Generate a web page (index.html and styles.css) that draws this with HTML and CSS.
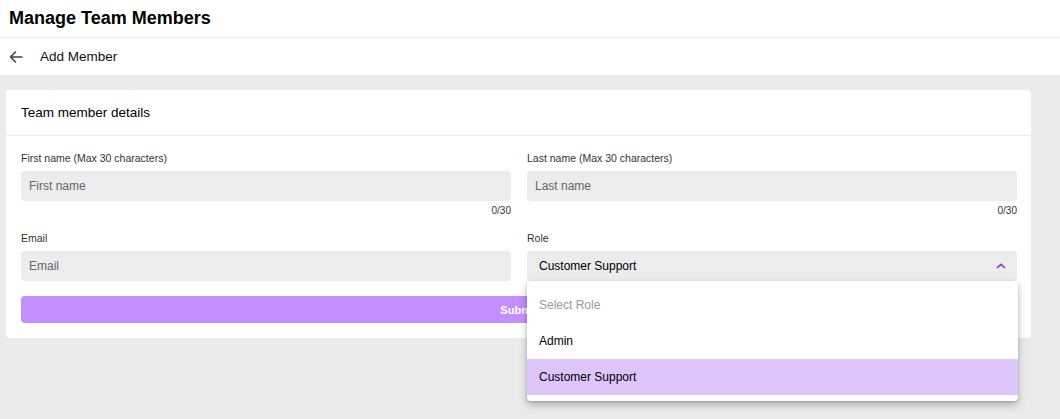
FILE: index.html
```html
<!DOCTYPE html>
<html lang="en">
<head>
  <meta charset="UTF-8" />
  <meta name="viewport" content="width=device-width, initial-scale=1.0"/>
  <title>Manage Team Members</title>
  <link rel="stylesheet" href="styles.css">
</head>
<body>

<div class="topbar">
  <h1>Manage Team Members</h1>
</div>

<div class="subbar">
  <svg class="back" width="16" height="16" viewBox="0 0 16 16"><path d="M14 8H2.5M7.5 3L2.5 8l5 5" fill="none" stroke="#444" stroke-width="1.6" stroke-linecap="round" stroke-linejoin="round"/></svg>
  <span>Add Member</span>
</div>

<div class="page">
  <div class="card">
    <div class="card-head">Team member details</div>
    <div class="card-body">
      <div class="grid">
        <div class="field">
          <label>First name (Max 30 characters)</label>
          <input type="text" class="form-input" placeholder="First name">
          <div class="count">0/30</div>
        </div>
        <div class="field">
          <label>Last name (Max 30 characters)</label>
          <input type="text" class="form-input" placeholder="Last name">
          <div class="count">0/30</div>
        </div>
        <div class="field">
          <label>Email</label>
          <input type="email" class="form-input" placeholder="Email">
        </div>
        <div class="field select-wrap">
          <label>Role</label>
          <div class="select">
            <span>Customer Support</span>
            <svg width="10" height="6" viewBox="0 0 10 6"><path d="M1 5L5 1.3 9 5" fill="none" stroke="#8a2be2" stroke-width="1.6"/></svg>
          </div>
          <ul class="options">
            <li class="placeholder">Select Role</li>
            <li>Admin</li>
            <li class="active">Customer Support</li>
          </ul>
        </div>
      </div>
      <button class="submit">Submit</button>
    </div>
  </div>
</div>

</body>
</html>
```

FILE: styles.css
```css
html, body { min-height: 419px; }
body { font-family: "Liberation Sans", Arial, sans-serif; margin: 0; padding: 0; background: #ebebeb; color: #111; }
.topbar { background: white; height: 37px; border-bottom: 1px solid #ececec; display: flex; align-items: center; padding-left: 9px; }
.topbar h1 { font-size: 18px; margin: 0; font-weight: bold; color: #000; }
.subbar { background: white; height: 37px; display: flex; align-items: center; padding-left: 8px; font-size: 13.5px; }
.subbar .back { margin-right: 16px; }
.page { padding: 15px 29px 0 6px; }
.card { background: white; border-radius: 4px; }
.card-head { height: 45px; border-bottom: 1px solid #ececec; display: flex; align-items: center; padding-left: 15px; font-size: 13.5px; color: #000; }
.card-body { padding: 15px 14px 15px 15px; }
.grid { display: grid; grid-template-columns: 1fr 1fr; column-gap: 16px; }
.field { display: flex; flex-direction: column; }
.field label { font-size: 10.5px; color: #333; height: 13px; margin: 1px 0 6px; }
.form-input { height: 30px; border: none; background: #ececec; border-radius: 4px; padding: 0 8px; font-family: inherit; font-size: 12px; box-sizing: border-box; width: 100%; }
.form-input::placeholder { color: #666; }
.count { font-size: 10px; color: #333; text-align: right; height: 13px; margin-top: 4px; margin-bottom: 13px; }
.select-wrap { position: relative; }
.select { height: 30px; background: #ececec; border-radius: 4px; display: flex; align-items: center; justify-content: space-between; padding: 0 11px 0 12px; font-size: 12px; color: #000; }
.options { position: absolute; left: 0; right: -1px; top: 50px; margin: 0; padding: 6px 0 6px; list-style: none; background: white; border-radius: 4px; box-shadow: 0 4px 8px rgba(0,0,0,0.25), 0 1px 3px rgba(0,0,0,0.15); font-size: 12px; z-index: 2; }
.options li { height: 36px; display: flex; align-items: center; padding-left: 12px; color: #000; }
.options li.placeholder { color: #999; }
.options li.active { background: #dcc5f9; }
.submit { display: block; width: 100%; height: 27px; margin-top: 15px; border: none; border-radius: 4px; background: #c38ffe; color: white; font-weight: bold; font-size: 11px; font-family: inherit; }
```
